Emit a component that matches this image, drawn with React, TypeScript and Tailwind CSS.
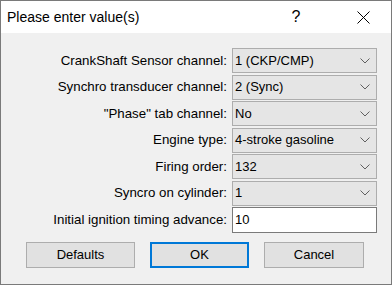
import React from 'react';

const font = { fontFamily: '"Liberation Sans", Arial, sans-serif' };

function Chevron() {
  return (
    <svg width="10" height="6" viewBox="0 0 10 6" className="text-[#606060]">
      <polyline points="0.5,0.5 5,5 9.5,0.5" fill="none" stroke="currentColor" strokeWidth="1" />
    </svg>
  );
}

function Combo({ value }: { value: string }) {
  return (
    <div className="flex h-[25px] items-center justify-between border border-[#adadad] bg-[#e5e5e5] pl-[2px] pr-[6px] text-[13px] text-black">
      <span>{value}</span>
      <Chevron />
    </div>
  );
}

const rows = [
  { label: 'CrankShaft Sensor channel:', value: '1 (CKP/CMP)' },
  { label: 'Synchro transducer channel:', value: '2 (Sync)' },
  { label: '"Phase" tab channel:', value: 'No' },
  { label: 'Engine type:', value: '4-stroke gasoline' },
  { label: 'Firing order:', value: '132' },
  { label: 'Syncro on cylinder:', value: '1' },
];

export default function App() {
  return (
    <div
      className="flex h-[285px] w-[392px] flex-col border border-[#7a7a7a] bg-[#f0f0f0]"
      style={font}
    >
      {/* title bar */}
      <div className="flex h-[32px] shrink-0 items-center bg-white pl-[6px] text-[14px] text-black">
        <span className="flex-1">Please enter value(s)</span>
        <span className="mr-[16px] w-[46px] text-center text-[16px]">?</span>
        <span className="flex w-[56px] items-center justify-center">
          <svg width="13" height="13" viewBox="0 0 13 13">
            <path d="M0.5 0.5 L12.5 12.5 M12.5 0.5 L0.5 12.5" stroke="#000" strokeWidth="1" />
          </svg>
        </span>
      </div>

      <div className="flex flex-1 flex-col pt-[15px] pr-[14px]">
        <div className="grid grid-cols-[1fr_145px] gap-x-[5px] gap-y-[1.5px]">
          {rows.map((r) => (
            <React.Fragment key={r.label}>
              <div className="flex items-center justify-end text-[13.3px] text-black">{r.label}</div>
              <Combo value={r.value} />
            </React.Fragment>
          ))}
          <div className="flex items-center justify-end text-[13.3px] text-black">
            Initial ignition timing advance:
          </div>
          <div className="flex h-[26px] items-center border border-[#7a7a7a] bg-white pl-[2px] text-[13px] text-black">
            10
          </div>
        </div>

        <div className="mt-[9px] flex gap-[15px] pl-[25px] text-[13px] text-black">
          <button className="h-[26px] w-[109px] border border-[#adadad] bg-[#e1e1e1]">Defaults</button>
          <button className="h-[26px] w-[99px] border-2 border-[#0078d7] bg-[#e1e1e1]">OK</button>
          <button className="h-[26px] w-[100px] border border-[#adadad] bg-[#e1e1e1]">Cancel</button>
        </div>
      </div>
    </div>
  );
}
